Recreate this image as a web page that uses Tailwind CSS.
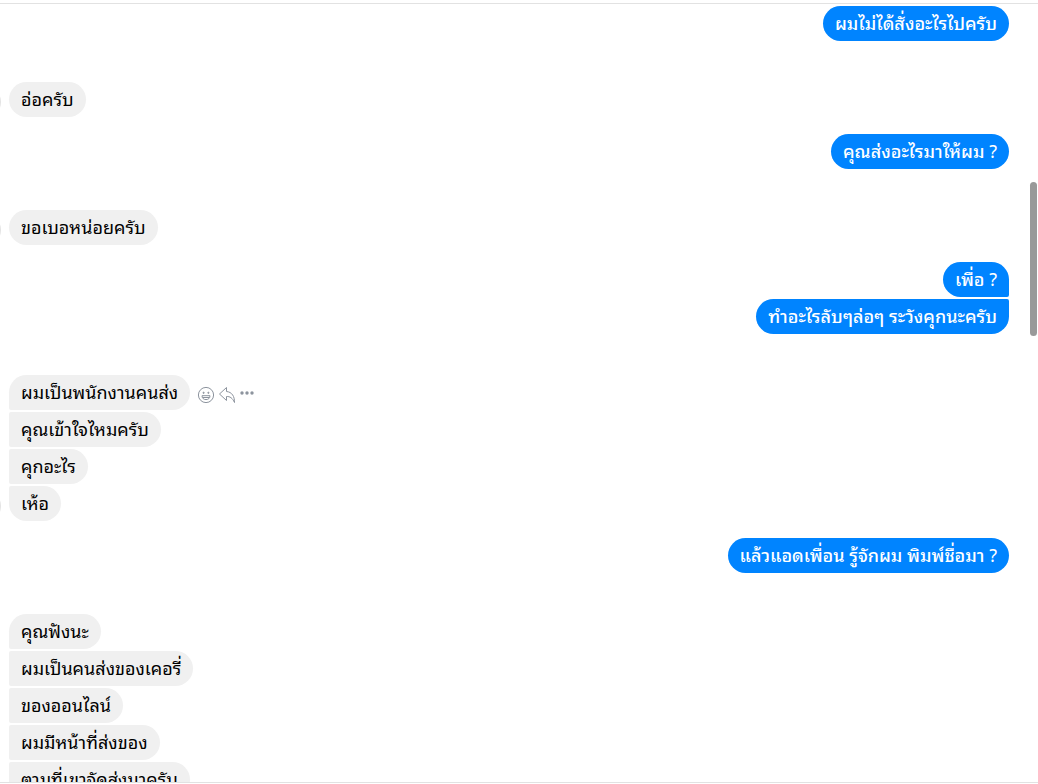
<!DOCTYPE html>
<html lang="th">
<head>
<meta charset="utf-8">
<meta name="viewport" content="width=device-width, initial-scale=1">
<title>Chat</title>
<script src="https://cdn.jsdelivr.net/npm/@tailwindcss/browser@4"></script>
</head>
<body class="bg-white">
<div class="flex h-screen flex-col pt-[3px] pb-px font-['Noto_Sans','Noto_Sans_Thai_Looped','Loma','Noto_Sans_Thai',sans-serif] text-[18px] leading-[19px] text-black">
<main class="relative min-h-0 flex-1 overflow-hidden border-y border-[#e2e2e2] pt-[2px] pr-[29px] pl-[9px]">
  <div class="absolute top-[178px] right-px h-[154px] w-[7px] rounded-full bg-[#999999]"></div>

  <section class="flex flex-col items-end gap-[2px] font-medium text-white">
    <p class="rounded-[18px] bg-[#0084ff] px-3 py-2 whitespace-nowrap">ผมไม่ได้สั่งอะไรไปครับ</p>
  </section>

  <section class="relative mt-[41px] flex flex-col items-start gap-[2px]">
    <span class="absolute -bottom-px -left-10 size-8 rounded-full bg-[#e4e4e4]"></span>
    <p class="rounded-[18px] bg-[#f0f0f0] px-3 py-2 whitespace-nowrap">อ่อครับ</p>
  </section>

  <section class="mt-[17px] flex flex-col items-end gap-[2px] font-medium text-white">
    <p class="rounded-[18px] bg-[#0084ff] px-3 py-2 whitespace-nowrap">คุณส่งอะไรมาให้ผม <span class="font-normal">?</span></p>
  </section>

  <section class="relative mt-[41px] flex flex-col items-start gap-[2px]">
    <span class="absolute -bottom-px -left-10 size-8 rounded-full bg-[#e4e4e4]"></span>
    <p class="rounded-[18px] bg-[#f0f0f0] px-3 py-2 whitespace-nowrap">ขอเบอหน่อยครับ</p>
  </section>

  <section class="mt-[17px] flex flex-col items-end gap-[2px] font-medium text-white">
    <p class="rounded-[18px] rounded-br-[2px] bg-[#0084ff] px-3 py-2 whitespace-nowrap">เพื่อ <span class="font-normal">?</span></p>
    <p class="rounded-[18px] rounded-tr-[2px] bg-[#0084ff] px-3 py-2 whitespace-nowrap">ทำอะไรลับๆล่อๆ ระวังคุกนะครับ</p>
  </section>

  <section class="relative mt-[41px] flex flex-col items-start gap-[2px]">
    <span class="absolute -bottom-px -left-10 size-8 rounded-full bg-[#e4e4e4]"></span>
    <div class="flex items-center gap-[7px]">
      <p class="rounded-[18px] rounded-bl-[2px] bg-[#f0f0f0] px-3 py-2 whitespace-nowrap">ผมเป็นพนักงานคนส่ง</p>
      <div class="flex items-center gap-[3px] pt-1 text-[#8d949e]">
        <button type="button" aria-label="React" class="size-[18px]">
          <svg viewBox="0 0 18 18" class="size-[18px]" fill="none" stroke="currentColor"><circle cx="9" cy="9" r="7.6"/><path d="M5 9.700h8c0 2.500-1.600 3.900-4 3.900S5 12.200 5 9.700ZM5.500 11.500h7"/><circle cx="6.600" cy="6.800" r=".6" fill="currentColor"/><circle cx="11.400" cy="6.800" r=".6" fill="currentColor"/></svg>
        </button>
        <button type="button" aria-label="Reply" class="size-[18px]">
          <svg viewBox="0 0 18 18" class="size-[18px]" fill="none" stroke="currentColor" stroke-linejoin="round"><path d="M8.500 1.500 1.500 8l7 6.500v-4c3.500-.2 6 1.500 8 6 .2-6-2.500-10.500-8-11Z"/></svg>
        </button>
        <button type="button" aria-label="More" class="size-[18px]">
          <svg viewBox="0 0 18 18" class="size-[18px]" fill="currentColor"><circle cx="3" cy="7" r="1.700"/><circle cx="8" cy="7" r="1.700"/><circle cx="13" cy="7" r="1.700"/></svg>
        </button>
      </div>
    </div>
    <p class="rounded-r-[18px] rounded-l-[2px] bg-[#f0f0f0] px-3 py-2 whitespace-nowrap">คุณเข้าใจไหมครับ</p>
    <p class="rounded-r-[18px] rounded-l-[2px] bg-[#f0f0f0] px-3 py-2 whitespace-nowrap">คุกอะไร</p>
    <p class="rounded-[18px] rounded-tl-[2px] bg-[#f0f0f0] px-3 py-2 whitespace-nowrap">เห้อ</p>
  </section>

  <section class="mt-[17px] flex flex-col items-end gap-[2px] font-medium text-white">
    <p class="rounded-[18px] bg-[#0084ff] px-3 py-2 whitespace-nowrap">แล้วแอดเพื่อน รู้จักผม พิมพ์ชื่อมา <span class="font-normal">?</span></p>
  </section>

  <section class="mt-[41px] flex flex-col items-start gap-[2px]">
    <p class="rounded-[18px] rounded-bl-[2px] bg-[#f0f0f0] px-3 py-2 whitespace-nowrap">คุณฟังนะ</p>
    <p class="rounded-r-[18px] rounded-l-[2px] bg-[#f0f0f0] px-3 py-2 whitespace-nowrap">ผมเป็นคนส่งของเคอรี่</p>
    <p class="rounded-r-[18px] rounded-l-[2px] bg-[#f0f0f0] px-3 py-2 whitespace-nowrap">ของออนไลน์</p>
    <p class="rounded-r-[18px] rounded-l-[2px] bg-[#f0f0f0] px-3 py-2 whitespace-nowrap">ผมมีหน้าที่ส่งของ</p>
    <p class="rounded-r-[18px] rounded-l-[2px] bg-[#f0f0f0] px-3 py-2 whitespace-nowrap">ตามที่เขาจัดส่งมาครับ</p>
  </section>
</main>
</div>
</body>
</html>
